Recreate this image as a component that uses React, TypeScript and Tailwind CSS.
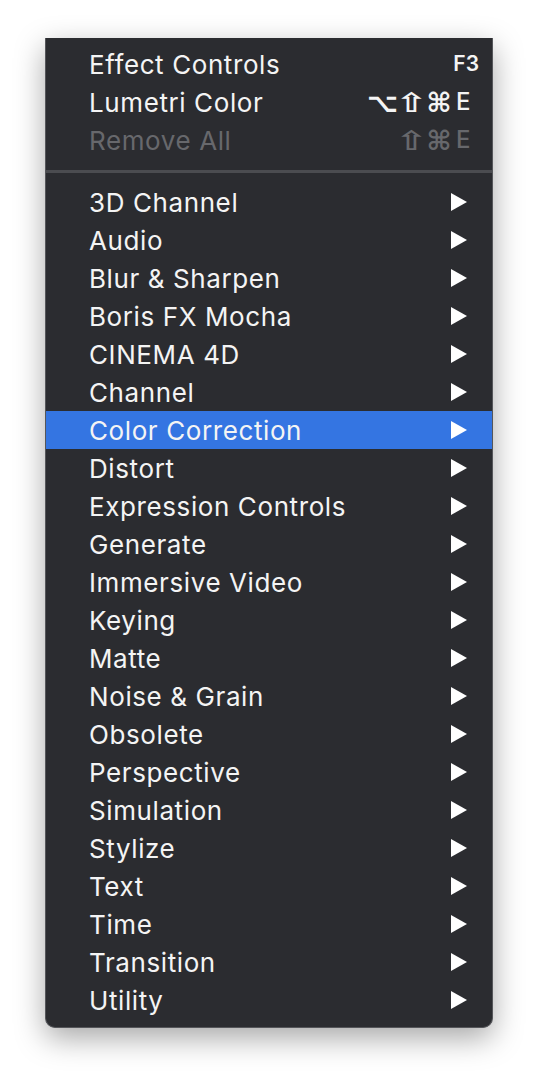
const top = [
  { label: "Effect Controls", keys: ["F3"] },
  { label: "Lumetri Color", keys: ["⌥", "⇧", "⌘", "E"] },
  { label: "Remove All", keys: ["⇧", "⌘", "E"], disabled: true },
];

const effects = [
  "3D Channel",
  "Audio",
  "Blur & Sharpen",
  "Boris FX Mocha",
  "CINEMA 4D",
  "Channel",
  "Color Correction",
  "Distort",
  "Expression Controls",
  "Generate",
  "Immersive Video",
  "Keying",
  "Matte",
  "Noise & Grain",
  "Obsolete",
  "Perspective",
  "Simulation",
  "Stylize",
  "Text",
  "Time",
  "Transition",
  "Utility",
];

function Arrow() {
  return (
    <svg width="18" height="20" viewBox="0 0 18 20" className="mr-[24px]">
      <path d="M1 1 L17 10 L1 19 Z" fill="#ffffff" />
    </svg>
  );
}

function Keys({ keys, disabled }: { keys: string[]; disabled?: boolean }) {
  if (keys[0] === "F3") {
    return <span className="mr-[13px] text-[21px] font-semibold text-[#f4f4f4]">F3</span>;
  }
  return (
    <span
      className={`mr-[22px] flex items-center gap-[5px] ${
        disabled ? "text-[#67686c]" : "text-[#f4f4f4]"
      }`}
    >
      {keys.map((k) => {
        if (k === "E")
          return (
            <span key={k} className="w-[14px] text-[24px] font-medium leading-none">
              E
            </span>
          );
        if (k === "⇧")
          return (
            <span
              key={k}
              className="w-[22px] flex justify-center font-['DejaVu_Sans',sans-serif] text-[27px] font-bold leading-none"
            >
              <span className="inline-block scale-x-[1.4]">⇧</span>
            </span>
          );
        return (
          <span
            key={k}
            className={`${k === "⌥" ? "w-[25px]" : "w-[24px]"} flex justify-center font-['DejaVu_Sans',sans-serif] text-[27px] font-bold leading-none`}
          >
            {k}
          </span>
        );
      })}
    </span>
  );
}

export default function App() {
  return (
    <div className="w-[538px] h-[1082px] bg-white pt-[38px] pl-[45px] font-['Inter','Liberation_Sans',sans-serif]">
      <div className="w-[448px] bg-[#2b2c30] border-x border-b border-[#55565a] rounded-b-[10px] pt-[7px] pb-[8px] shadow-[0_10px_30px_rgba(0,0,0,0.35)]">
        {top.map((item) => (
          <div key={item.label} className="h-[38px] flex items-center justify-between pl-[43px]">
            <span
              className={`text-[26px] tracking-[0.6px] ${
                item.disabled ? "text-[#67686c]" : "text-[#f4f4f4]"
              }`}
            >
              {item.label}
            </span>
            <Keys keys={item.keys} disabled={item.disabled} />
          </div>
        ))}

        <div className="h-[24px] flex items-center">
          <div className="w-full h-[3px] bg-[#4b4c50]" />
        </div>

        {effects.map((name) => (
          <div
            key={name}
            className={`h-[38px] flex items-center justify-between pl-[43px] ${
              name === "Color Correction" ? "bg-[#3475e2]" : ""
            }`}
          >
            <span className="text-[26px] text-[#f4f4f4] tracking-[0.6px]">{name}</span>
            <Arrow />
          </div>
        ))}
      </div>
    </div>
  );
}
